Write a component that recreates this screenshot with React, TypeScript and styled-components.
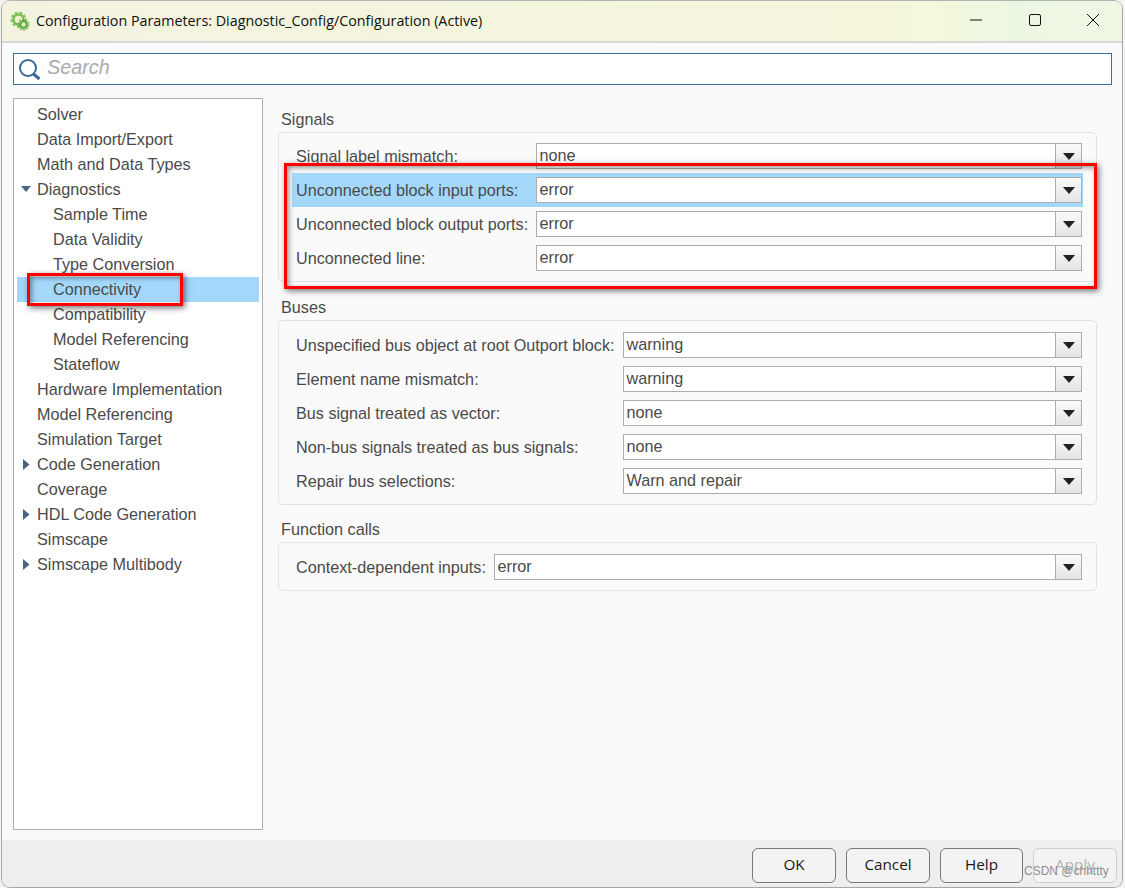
import React from "react";
import styled, { createGlobalStyle } from "styled-components";

const Global = createGlobalStyle`
  html, body { margin: 0; padding: 0; background: #f4f4f4; }
  body { width: 1125px; height: 888px; overflow: hidden; font-family: "Liberation Sans", Arial, sans-serif; }
`;

const Window = styled.div`
  position: relative;
  box-sizing: border-box;
  width: 1122px;
  height: 888px;
  margin-left: 1px;
  display: flex;
  flex-direction: column;
  background: #fafafa;
  border: 1px solid #a6a6a6;
  border-top-color: #b4b4b4;
  border-radius: 9px;
  overflow: hidden;
`;

const TitleBar = styled.div`
  flex: 0 0 40px;
  display: flex;
  align-items: center;
  padding-left: 8px;
  background: linear-gradient(90deg, #f3f3e0 0%, #f5f6dc 78%, #f3f8dc 84%, #ecf7e3 90%, #edf7e4 100%);
  border-bottom: 2px solid #d6d6d6;
  font-family: "Open Sans", "Noto Sans", sans-serif;
  color: #111;
`;

const TitleText = styled.span`
  margin-left: 6px;
  margin-top: -2px;
  flex: 1;
  font-size: 14.3px;
  white-space: nowrap;
`;

const WinButton = styled.button`
  width: 58px;
  height: 38px;
  padding: 0;
  border: 0;
  background: none;
  display: flex;
  align-items: center;
  justify-content: center;
  &:not(:first-child) { padding-left: 2px; }
`;

const WinButtons = styled.div`
  display: flex;
  margin-top: -2px;
  padding-right: 1px;
`;

const Body = styled.div`
  flex: 1;
  display: flex;
  flex-direction: column;
  padding: 10px 9px 10px 11px;
  min-height: 0;
`;

const SearchBox = styled.div`
  box-sizing: border-box;
  flex: 0 0 32px;
  width: 1099px;
  display: flex;
  align-items: center;
  gap: 6px;
  padding-left: 5px;
  background: #fff;
  border: 1px solid #3e6fa3;
`;

const SearchText = styled.span`
  font-style: italic;
  font-size: 19.8px;
  color: #aaaaaa;
  margin-top: -4px;
`;

const Main = styled.div`
  flex: 1;
  display: flex;
  margin-top: 13px;
  min-height: 0;
`;

const Tree = styled.div`
  box-sizing: border-box;
  flex: 0 0 250px;
  height: 732px;
  padding: 3px;
  background: #fff;
  border: 1px solid #adadad;
`;

const TreeRow = styled.div<{ $level: number; $selected?: boolean }>`
  position: relative;
  box-sizing: border-box;
  height: 25px;
  line-height: 25px;
  padding-left: ${(p) => (p.$level === 2 ? 36 : 20)}px;
  font-size: 16.2px;
  color: #4a4a4a;
  background: ${(p) => (p.$selected ? "#a4d8fb" : "transparent")};
`;

const Arrow = styled.svg`
  position: absolute;
  left: 4px;
  top: 7px;
  width: 11px;
  height: 11px;
`;

const Panel = styled.div`
  flex: 1;
  padding: 1px 16px 0 15px;
  display: flex;
  flex-direction: column;
`;

const SectionTitle = styled.div<{ $before: number }>`
  height: 18px;
  line-height: 16px;
  margin-top: ${(p) => p.$before}px;
  margin-bottom: 3px;
  padding-left: 3px;
  font-size: 16.2px;
  color: #4a4a4a;
`;

const Group = styled.div<{ $padTop: number }>`
  box-sizing: border-box;
  display: flex;
  flex-direction: column;
  padding: ${(p) => p.$padTop}px 13px 6px 13px;
  border: 1px solid #e2e2e2;
  border-radius: 5px;
`;

const Row = styled.div<{ $active?: boolean; $col: number }>`
  box-sizing: border-box;
  height: 34px;
  display: grid;
  grid-template-columns: ${(p) => p.$col}px 1fr;
  align-items: center;
  padding: 0 1px 0 4px;
  font-size: 16.2px;
  color: #4a4a4a;
  background: ${(p) => (p.$active ? "#a4d8fb" : "transparent")};
`;

const RowLabel = styled.span`
  white-space: nowrap;
`;

const Select = styled.div`
  box-sizing: border-box;
  height: 26px;
  display: flex;
  background: #fff;
  border: 1px solid #adadad;
  align-items: stretch;
`;

const SelectValue = styled.div`
  flex: 1;
  padding-left: 2.500px;
  line-height: 22px;
  font-size: 16.2px;
  color: #4a4a4a;
`;

const SelectButton = styled.div`
  width: 26px;
  box-sizing: border-box;
  border-left: 1px solid #adadad;
  background: linear-gradient(180deg, #fafafa 0%, #e4e4e4 100%);
  display: flex;
  align-items: center;
  justify-content: center;
`;

const Footer = styled.div`
  flex: 0 0 47px;
  box-sizing: border-box;
  display: flex;
  justify-content: flex-end;
  gap: 10px;
  padding: 8px 5px 0 0;
  background: #eeeeee;
`;

const FootButton = styled.button<{ $w: number; $disabled?: boolean }>`
  box-sizing: border-box;
  width: ${(p) => p.$w}px;
  height: 35px;
  padding: 0 0 4px;
  border-radius: 6px;
  border: 1px solid ${(p) => (p.$disabled ? "#cfcfcf" : "#7a7a7a")};
  background: #f3f3f3;
  font-family: "Open Sans", "Noto Sans", sans-serif;
  font-size: 15.25px;
  color: ${(p) => (p.$disabled ? "#b4b4b4" : "#1a1a1a")};
`;

const Watermark = styled.span`
  position: absolute;
  left: 1022px;
  top: 862px;
  font-size: 12px;
  line-height: 16px;
  color: #8f8f8f;
  white-space: nowrap;
`;

const RedBox = styled.div`
  position: absolute;
  box-sizing: border-box;
  border: 3px solid #fe0000;
  box-shadow: 2px 2px 6px rgba(0, 0, 0, 0.55), inset 2px 2px 5px rgba(0, 0, 0, 0.4);
  pointer-events: none;
`;

const TreeBox = styled(RedBox)`
  left: 25px;
  top: 272px;
  width: 156px;
  height: 33px;
`;

const SignalsBox = styled(RedBox)`
  left: 282px;
  top: 162px;
  width: 813px;
  height: 126px;
`;

const treeItems: { t: string; l: number; a?: "down" | "right"; s?: boolean }[] = [
  { t: "Solver", l: 1 },
  { t: "Data Import/Export", l: 1 },
  { t: "Math and Data Types", l: 1 },
  { t: "Diagnostics", l: 1, a: "down" },
  { t: "Sample Time", l: 2 },
  { t: "Data Validity", l: 2 },
  { t: "Type Conversion", l: 2 },
  { t: "Connectivity", l: 2, s: true },
  { t: "Compatibility", l: 2 },
  { t: "Model Referencing", l: 2 },
  { t: "Stateflow", l: 2 },
  { t: "Hardware Implementation", l: 1 },
  { t: "Model Referencing", l: 1 },
  { t: "Simulation Target", l: 1 },
  { t: "Code Generation", l: 1, a: "right" },
  { t: "Coverage", l: 1 },
  { t: "HDL Code Generation", l: 1, a: "right" },
  { t: "Simscape", l: 1 },
  { t: "Simscape Multibody", l: 1, a: "right" },
];

const groups: {
  title: string;
  col: number;
  before: number;
  padTop: number;
  rows: { l: string; v: string; active?: boolean }[];
}[] = [
  {
    title: "Signals",
    col: 240,
    before: 12,
    padTop: 6,
    rows: [
      { l: "Signal label mismatch:", v: "none" },
      { l: "Unconnected block input ports:", v: "error", active: true },
      { l: "Unconnected block output ports:", v: "error" },
      { l: "Unconnected line:", v: "error" },
    ],
  },
  {
    title: "Buses",
    col: 327,
    before: 17,
    padTop: 7,
    rows: [
      { l: "Unspecified bus object at root Outport block:", v: "warning" },
      { l: "Element name mismatch:", v: "warning" },
      { l: "Bus signal treated as vector:", v: "none" },
      { l: "Non-bus signals treated as bus signals:", v: "none" },
      { l: "Repair bus selections:", v: "Warn and repair" },
    ],
  },
  {
    title: "Function calls",
    col: 198,
    before: 16,
    padTop: 7,
    rows: [{ l: "Context-dependent inputs:", v: "error" }],
  },
];

const Gear = () => (
  <svg width="20" height="20" viewBox="0 0 20 20">
    <circle cx="8.500" cy="8.500" r="7" fill="none" stroke="#8fc86a" strokeWidth="2.200" strokeDasharray="3 1.800" />
    <circle cx="8.500" cy="8.500" r="5" fill="#eef3cf" stroke="#7cbd55" strokeWidth="2.600" />
    <circle cx="13.500" cy="13.500" r="5.200" fill="none" stroke="#6fb445" strokeWidth="1.600" strokeDasharray="2 1.200" />
    <circle cx="13.500" cy="13.500" r="3.300" fill="#dfeeb8" stroke="#5aa53f" strokeWidth="2" />
  </svg>
);

const DropGlyph = () => (
  <svg width="12" height="7" viewBox="0 0 12 7">
    <path d="M0 0h12L6 7z" fill="#222" />
  </svg>
);

export default function App() {
  return (
    <>
      <Global />
      <Window>
        <TitleBar>
          <Gear />
          <TitleText>Configuration Parameters: Diagnostic_Config/Configuration (Active)</TitleText>
          <WinButtons>
            <WinButton aria-label="Minimize">
              <svg width="12" height="12" viewBox="0 0 12 12">
                <path d="M0 6h12" stroke="#111" strokeWidth="1" />
              </svg>
            </WinButton>
            <WinButton aria-label="Maximize">
              <svg width="12" height="12" viewBox="0 0 12 12">
                <rect x="0.500" y="0.500" width="11" height="11" rx="1.500" fill="none" stroke="#111" />
              </svg>
            </WinButton>
            <WinButton aria-label="Close">
              <svg width="12" height="12" viewBox="0 0 12 12">
                <path d="M0 0l12 12M12 0L0 12" stroke="#111" strokeWidth="1" />
              </svg>
            </WinButton>
          </WinButtons>
        </TitleBar>
        <Body>
          <SearchBox>
            <svg width="22" height="25" viewBox="0 0 22 25">
              <circle cx="9" cy="11" r="8" fill="none" stroke="#36689c" strokeWidth="2" />
              <path d="M14.500 17l6 5" stroke="#36689c" strokeWidth="3" />
            </svg>
            <SearchText>Search</SearchText>
          </SearchBox>
          <Main>
            <Tree>
              {treeItems.map((it, i) => (
                <TreeRow key={i} $level={it.l} $selected={it.s}>
                  {it.a && (
                    <Arrow viewBox="0 0 11 11">
                      <path d={it.a === "down" ? "M0 2h10L5 8z" : "M2 0l6.500 5.500L2 11z"} fill="#4a6380" />
                    </Arrow>
                  )}
                  {it.t}
                </TreeRow>
              ))}
            </Tree>
            <Panel>
              {groups.map((g) => (
                <React.Fragment key={g.title}>
                  <SectionTitle $before={g.before}>{g.title}</SectionTitle>
                  <Group $padTop={g.padTop}>
                    {g.rows.map((r) => (
                      <Row key={r.l} $col={g.col} $active={r.active}>
                        <RowLabel>{r.l}</RowLabel>
                        <Select>
                          <SelectValue>{r.v}</SelectValue>
                          <SelectButton>
                            <DropGlyph />
                          </SelectButton>
                        </Select>
                      </Row>
                    ))}
                  </Group>
                </React.Fragment>
              ))}
            </Panel>
          </Main>
        </Body>
        <Footer>
          <FootButton $w={84}>OK</FootButton>
          <FootButton $w={84}>Cancel</FootButton>
          <FootButton $w={83}>Help</FootButton>
          <FootButton $w={84} $disabled>Apply</FootButton>
        </Footer>
        <TreeBox />
        <SignalsBox />
        <Watermark>CSDN @chhttty</Watermark>
      </Window>
    </>
  );
}
